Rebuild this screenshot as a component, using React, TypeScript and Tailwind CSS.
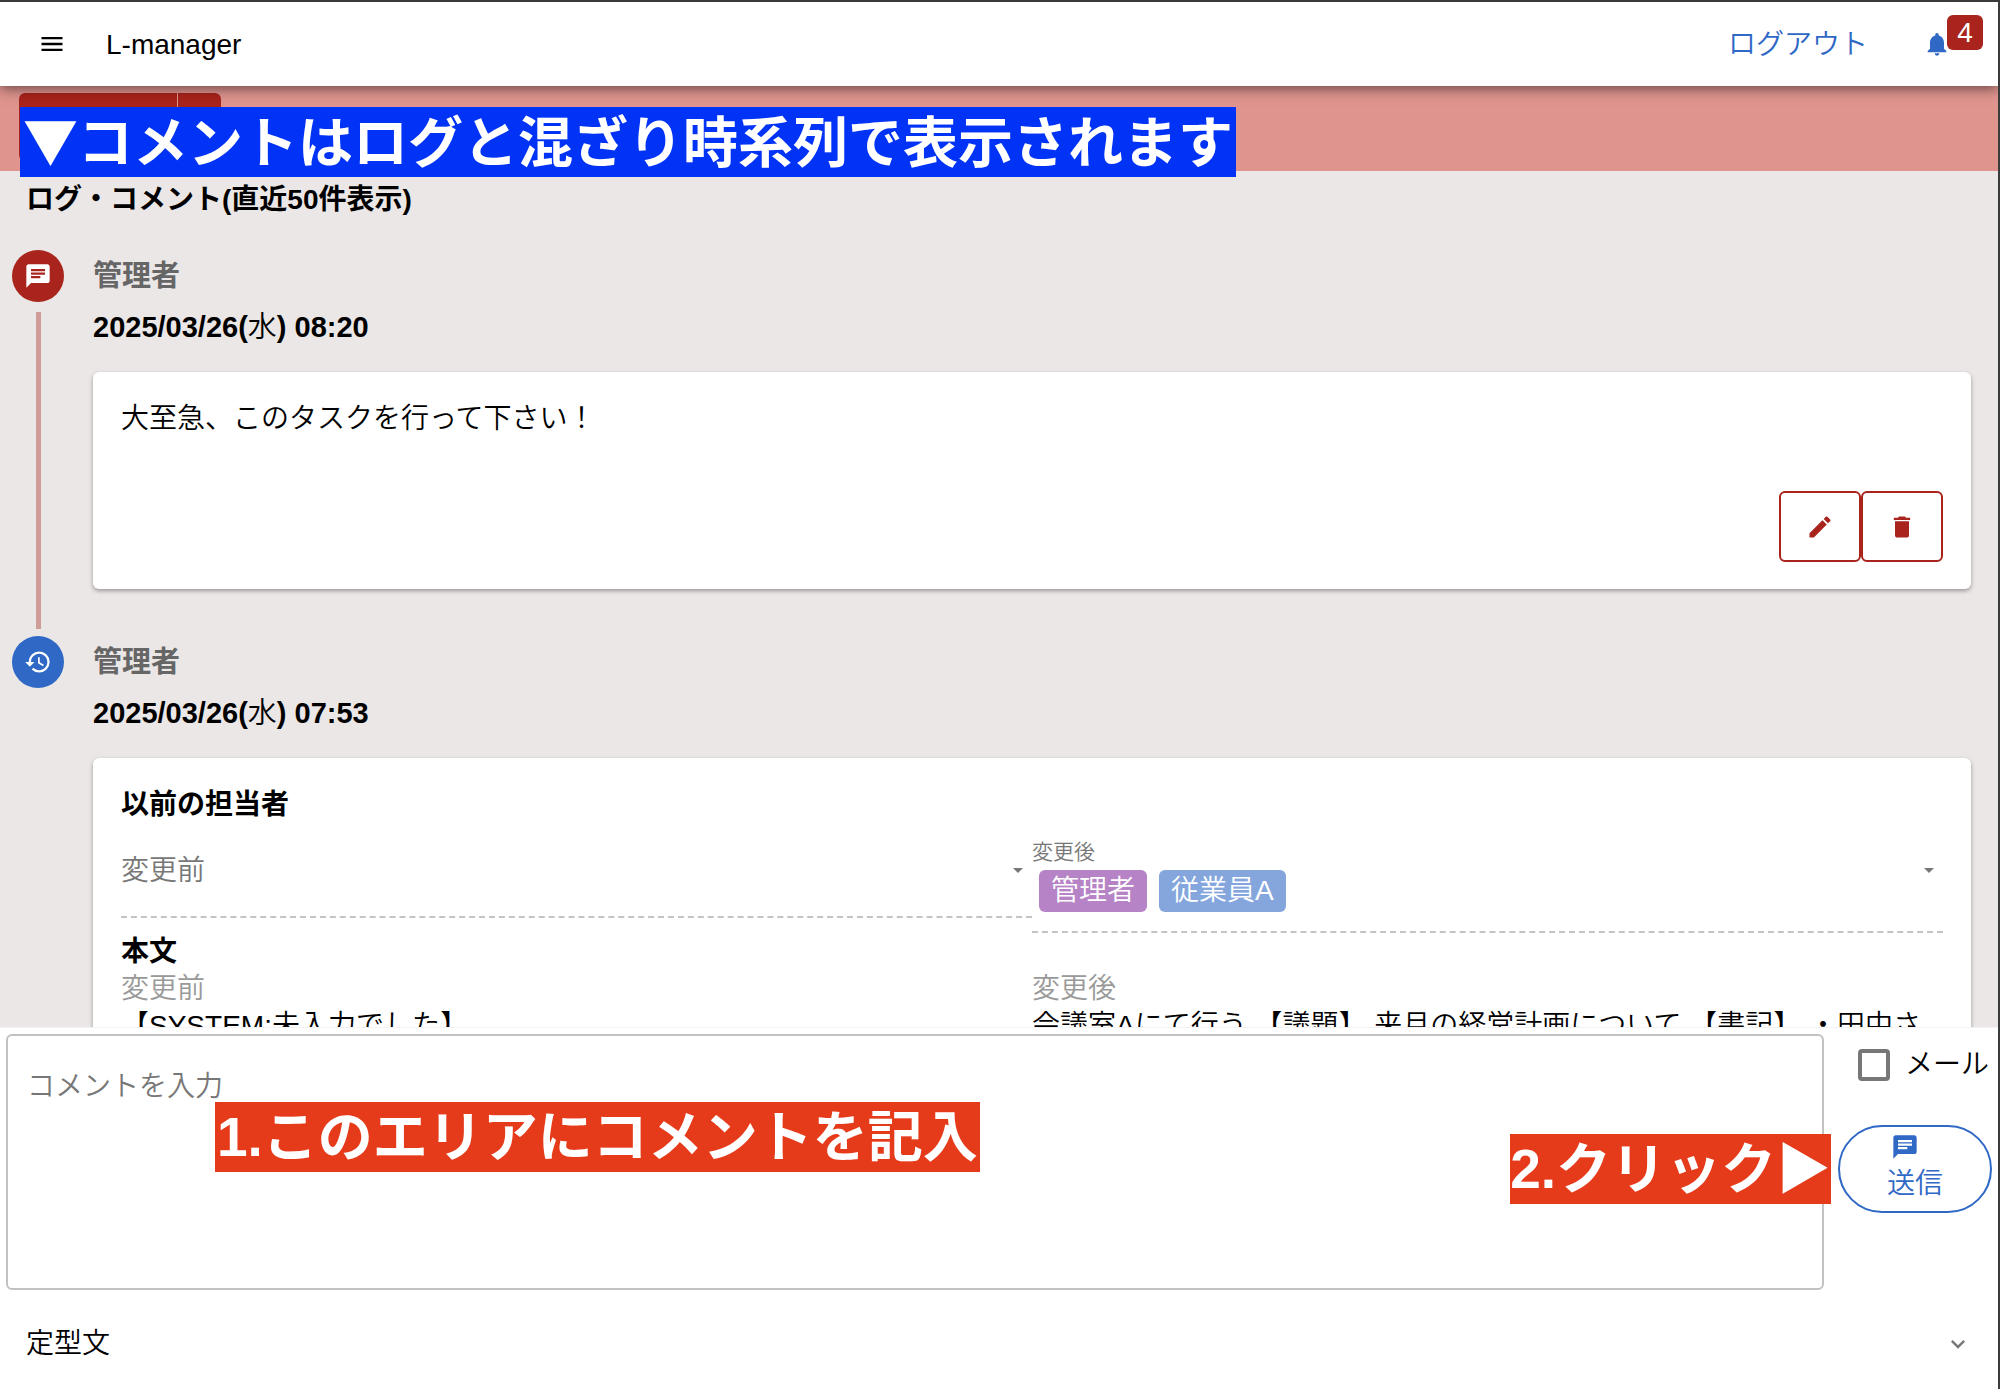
import { useState } from "react";
import {
    MdArrowDropDown,
    MdChat,
    MdDelete,
    MdEdit,
    MdExpandMore,
    MdHistory,
    MdMenu,
    MdNotifications,
} from "react-icons/md";
import type { ReactNode } from "react";

interface TimelineItemProps {
    user: string;
    date: string;
    weekday: string;
    time: string;
    icon: ReactNode;
    kind: "comment" | "history";
    last?: boolean;
    children: ReactNode;
}

function TimelineItem({ user, date, weekday, time, icon, kind, last, children }: TimelineItemProps) {
    return (
        <li className="flex">
            <div className="flex w-[52px] shrink-0 flex-col items-center">
                <div
                    className={
                        kind === "comment"
                            ? "flex h-[52px] w-[52px] shrink-0 items-center justify-center rounded-full bg-[#a8241c] text-white"
                            : "flex h-[52px] w-[52px] shrink-0 items-center justify-center rounded-full bg-[#2f68c5] text-white"
                    }
                >
                    {icon}
                </div>
                {!last && <div className="mt-2.5 mb-[7px] w-[5px] grow bg-[#cf9c98]" />}
            </div>
            <div className="ml-[29px] min-w-0 grow pb-[47px]">
                <h3 className="pt-2 text-[29px] leading-[37px] font-bold text-[#666]">{user}</h3>
                <p className="mt-3.5 text-[29px] leading-[37px] font-bold">
                    {date}(<span className="font-[350]">{weekday}</span>) {time}
                </p>
                <div className="mt-[26px] rounded-md bg-white px-7 pt-7 pb-[27px] shadow-[0_2px_4px_rgba(0,0,0,0.35)]">
                    {children}
                </div>
            </div>
        </li>
    );
}

function LogCommentList() {
    return (
        <main className="min-h-0 grow overflow-hidden bg-[#ebe7e6]">
            <h2 className="px-[26px] pt-2.5 text-[28px] leading-[37px] font-bold">ログ・コメント(直近50件表示)</h2>
            <ul className="mt-8 pr-[27px] pl-3">
                <TimelineItem
                    user="管理者"
                    date="2025/03/26"
                    weekday="水"
                    time="08:20"
                    kind="comment"
                    icon={<MdChat className="h-7 w-7" />}
                >
                    <p className="text-[28px] leading-[37px]">大至急、このタスクを行って下さい！</p>
                    <div className="mt-[54px] flex justify-end">
                        <button
                            aria-label="編集"
                            className="flex h-[71px] w-[82px] items-center justify-center rounded-md border-2 border-[#a8241c] text-[#a8241c]"
                        >
                            <MdEdit className="h-7 w-7" />
                        </button>
                        <button
                            aria-label="削除"
                            className="flex h-[71px] w-[82px] items-center justify-center rounded-md border-2 border-[#a8241c] text-[#a8241c]"
                        >
                            <MdDelete className="h-7 w-7" />
                        </button>
                    </div>
                </TimelineItem>

                <TimelineItem
                    user="管理者"
                    date="2025/03/26"
                    weekday="水"
                    time="07:53"
                    kind="history"
                    icon={<MdHistory className="h-7 w-7" />}
                    last
                >
                    <h4 className="text-[28px] leading-[37px] font-bold">以前の担当者</h4>
                    <div className="mt-[18px] grid grid-cols-2 items-start">
                        <div className="relative h-[77px] border-b-2 border-dashed border-[#c4c4c4]">
                            <select
                                aria-label="変更前"
                                className="h-[60px] w-full appearance-none bg-transparent text-[28px] font-[350] text-[#777] outline-none"
                            >
                                <option>変更前</option>
                            </select>
                            <MdArrowDropDown className="pointer-events-none absolute top-[17px] right-0.5 h-6 w-6 text-[#777]" />
                        </div>
                        <button
                            aria-haspopup="listbox"
                            className="relative flex h-[92px] flex-col items-start border-b-2 border-dashed border-[#c4c4c4] text-left font-[350]"
                        >
                            <span className="mb-[7px] text-[21px] leading-[22px] text-[#777]">変更後</span>
                            <span className="ml-[7px] flex gap-3 text-[28px] leading-[42px] text-white">
                                <span className="rounded-md bg-[#b684c6] px-3">管理者</span>
                                <span className="rounded-md bg-[#84a6dc] px-3">従業員A</span>
                            </span>
                            <MdArrowDropDown className="absolute top-[17px] right-0.5 h-6 w-6 text-[#777]" />
                        </button>
                    </div>
                    <h4 className="text-[28px] leading-[37px] font-bold">本文</h4>
                    <div className="grid grid-cols-2 text-[28px] leading-[37px]">
                        <div>
                            <p className="text-[#999]">変更前</p>
                            <p>【SYSTEM:未入力でした】</p>
                        </div>
                        <div>
                            <p className="text-[#999]">変更後</p>
                            <p>会議室Aにて行う 【議題】 来月の経営計画について 【書記】 ・田中さ</p>
                        </div>
                    </div>
                </TimelineItem>
            </ul>
        </main>
    );
}

function CommentForm() {
    const [comment, setComment] = useState("");
    const [mail, setMail] = useState(false);

    return (
        <footer className="relative shrink-0 border-t border-[#f3f3f3] bg-white">
            <div className="flex pt-1.5 pl-1.5">
                <textarea
                    aria-label="コメントを入力"
                    placeholder="コメントを入力"
                    value={comment}
                    onChange={(e) => setComment(e.target.value)}
                    className="block h-[256px] min-w-0 grow resize-none rounded-md border-2 border-[#c2c2c2] px-[19px] py-8 text-[28px] leading-[37px] font-[350] outline-none placeholder:text-[#777]"
                />
                <div className="flex w-[174px] shrink-0 flex-col items-end">
                    <label className="flex items-center gap-[15px] pt-3 pr-[9px] text-[28px] leading-[37px]">
                        <input
                            type="checkbox"
                            checked={mail}
                            onChange={(e) => setMail(e.target.checked)}
                            className="h-8 w-8 appearance-none rounded-sm border-4 border-[#777] checked:bg-[#2f68c5]"
                        />
                        メール
                    </label>
                    <button className="mt-[42px] mr-1.5 flex h-[88px] w-[154px] flex-col items-center rounded-full border-2 border-[#2f68c5] pt-1.5 text-[28px] leading-[37px] text-[#2f68c5]">
                        <MdChat className="mr-5 mb-1 h-7 w-7" />
                        送信
                    </button>
                </div>
            </div>
            <button className="flex w-full items-center justify-between px-[26px] pt-[35px] pb-[27px] text-[28px] leading-[37px]">
                定型文
                <MdExpandMore className="h-7 w-7 text-[#777]" />
            </button>

            {/* guide labels */}
            <div className="absolute top-[74px] left-[215px] bg-[#e63b1a] px-0.5 text-[55px] leading-[70px] font-bold whitespace-nowrap text-white">
                1.このエリアにコメントを記入
            </div>
            <div className="absolute top-[106px] right-[167px] bg-[#e63b1a] text-[55px] leading-[70px] font-bold whitespace-nowrap text-white">
                2.クリック▶
            </div>
        </footer>
    );
}

export default function App() {
    return (
        <div className="flex h-screen flex-col overflow-hidden border-t-2 border-r-2 border-[#3a3c3c] bg-white font-['Liberation_Sans','Noto_Sans_CJK_JP',sans-serif] font-[350] text-black">
            <header className="relative z-10 flex h-[84px] shrink-0 items-center bg-white pr-4 pl-[38px] shadow-[0_3px_12px_rgba(0,0,0,0.5)]">
                <button aria-label="メニュー">
                    <MdMenu className="h-7 w-7" />
                </button>
                <h1 className="ml-10 text-[28px] leading-[37px] font-[350]">L-manager</h1>
                <a href="#" className="mr-[55px] ml-auto text-[28px] leading-[37px] text-[#2f68c5]">
                    ログアウト
                </a>
                <button aria-label="通知" className="relative mr-[31px] text-[#2f68c5]">
                    <MdNotifications className="h-7 w-7" />
                    <span className="absolute bottom-2 left-6 flex h-[35px] w-9 items-center justify-center rounded-md bg-[#a8241c] text-[28px] text-white">
                        4
                    </span>
                </button>
            </header>

            <div className="relative flex h-[85px] shrink-0 bg-[#df948e] pt-[7px] pl-[19px]">
                <button aria-label="保存" className="h-[68px] w-[159px] rounded-l-md border-r border-[#df948e] bg-[#a8241c]" />
                <button aria-label="その他" className="h-[68px] w-[43px] rounded-r-md bg-[#a8241c]" />
                <div className="absolute top-[21px] left-5 bg-[#0033f5] px-[3px] pb-2 font-['Noto_Sans_CJK_JP',sans-serif] text-[55px] leading-[62px] font-bold whitespace-nowrap text-white">
                    ▼コメントはログと混ざり時系列で表示されます
                </div>
            </div>

            <LogCommentList />
            <CommentForm />
        </div>
    );
}
